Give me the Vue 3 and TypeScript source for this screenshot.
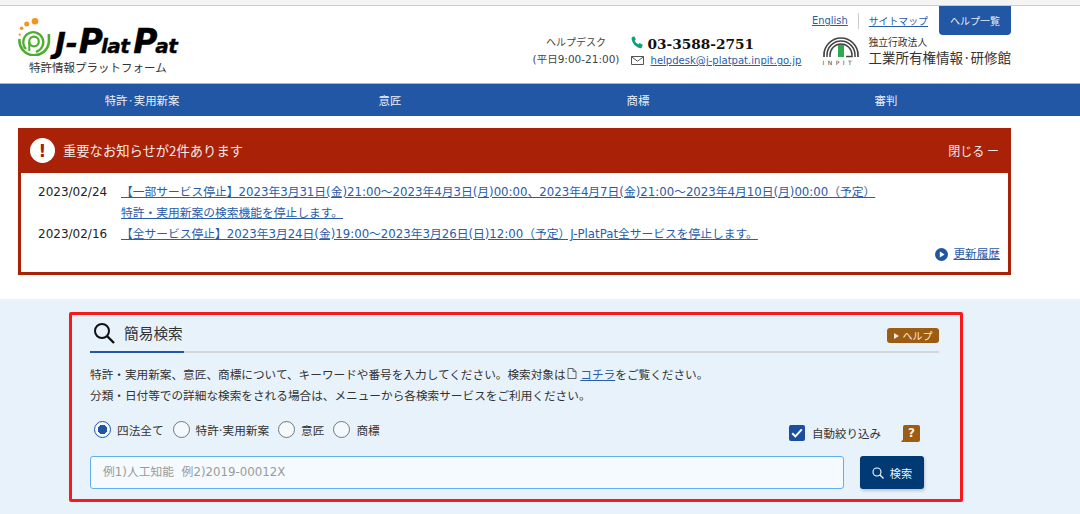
<script setup lang="ts">
const navItems: string[] = ['特許·実用新案', '意匠', '商標', '審判']
const notices = [
  { date: '2023/02/24', lines: ['【一部サービス停止】2023年3月31日(金)21:00～2023年4月3日(月)00:00、2023年4月7日(金)21:00～2023年4月10日(月)00:00（予定）', '特許・実用新案の検索機能を停止します。'] },
  { date: '2023/02/16', lines: ['【全サービス停止】2023年3月24日(金)19:00～2023年3月26日(日)12:00（予定）J-PlatPat全サービスを停止します。'] },
]
const radios = [
  { label: '四法全て', on: true },
  { label: '特許·実用新案', on: false },
  { label: '意匠', on: false },
  { label: '商標', on: false },
]
</script>

<template>
  <div class="page">
    <div class="topstrip"></div>
    <header class="header">
      <div class="logo">
        <div class="logo-row">
          <svg class="logo-mark" width="33" height="39" viewBox="0 0 33 39">
            <circle cx="17" cy="4.300" r="3.300" fill="#f7941d" />
            <circle cx="8.700" cy="7" r="2.500" fill="#f7941d" />
            <circle cx="3.700" cy="11.300" r="1.800" fill="#f7941d" />
            <circle cx="1.700" cy="17.700" r="1.100" fill="#f7941d" />
            <path d="M1.500 22a14.700 14.700 0 0 0 29.400 3V17" fill="none" stroke="#4cae2e" stroke-width="2.600" />
            <path d="M8 32a10 10 0 1 1 10 2.800" fill="none" stroke="#4cae2e" stroke-width="2.300" />
            <circle cx="16" cy="24.500" r="4.800" fill="none" stroke="#4cae2e" stroke-width="2.200" />
            <path d="M11.300 25V34" fill="none" stroke="#4cae2e" stroke-width="2" />
          </svg>
          <div class="logo-text">
            <span class="lt-j">J-</span><span class="lt-p">P</span><span class="lt-s">lat</span><span class="lt-p lt-p2">P</span><span class="lt-s">at</span>
          </div>
        </div>
        <div class="logo-sub">特許情報プラットフォーム</div>
      </div>
      <div class="head-right">
        <div class="toplinks">
          <a class="link">English</a>
          <span class="divider"></span>
          <a class="link">サイトマップ</a>
          <span class="help-list">ヘルプ一覧</span>
        </div>
        <div class="contact">
          <div class="desk">
            <div class="desk-name">ヘルプデスク</div>
            <div>(平日9:00-21:00)</div>
          </div>
          <div class="reach">
            <div class="tel">
              <svg width="13" height="13" viewBox="0 0 13 13">
                <path d="M1 1.200 3.200.3l1.700 3-1.200 1.200c.7 1.700 2 3 3.600 3.700L8.600 7l3.200 1.700L11 11.200c-.3.800-1 1.200-1.800 1C4.800 11.300 1.500 7.500.6 3c-.1-.8 0-1.400.4-1.800z" fill="#12a07c" />
              </svg>
              <span class="tel-num">03-3588-2751</span>
            </div>
            <div class="mail">
              <svg width="13" height="9" viewBox="0 0 13 9">
                <path d="M.5.5h12v8H.5zM.5.8 6.500 5.200 12.500.8" fill="none" stroke="#555" stroke-width="1" />
              </svg>
              <a class="link mail-link">helpdesk@j-platpat.inpit.go.jp</a>
            </div>
          </div>
          <div class="inpit">
            <div class="inpit-mark">
              <svg width="38" height="22" viewBox="0 0 38 22">
                <path d="M2 21V19A17 17 0 0 1 36 19V21" fill="none" stroke="#444" stroke-width="1.700" />
                <path d="M5 21V19A14 14 0 0 1 33 19V21" fill="none" stroke="#444" stroke-width="1.500" />
                <path d="M8 21V19A11 11 0 0 1 30 19V20.500H24" fill="none" stroke="#444" stroke-width="1.500" />
                <path d="M16 9h6v12h-6z" fill="#2fa84f" />
              </svg>
              <span class="inpit-word">INPIT</span>
            </div>
            <div class="inpit-text">
              <div class="inpit-small">独立行政法人</div>
              <div class="inpit-big">工業所有権情報·研修館</div>
            </div>
          </div>
        </div>
      </div>
    </header>

    <nav class="nav">
      <span v-for="n in navItems" :key="n" class="nav-item">{{ n }}</span>
    </nav>

    <section class="notice">
      <div class="notice-head">
        <div class="notice-title">
          <span class="bang">!</span>
          <span>重要なお知らせが2件あります</span>
        </div>
        <span class="close">閉じる ー</span>
      </div>
      <div class="notice-body">
        <div v-for="n in notices" :key="n.date" class="notice-row">
          <span class="notice-date">{{ n.date }}</span>
          <div class="notice-lines">
            <div v-for="l in n.lines" :key="l"><a class="link">{{ l }}</a></div>
          </div>
        </div>
        <div class="history">
          <svg width="13" height="13" viewBox="0 0 13 13">
            <circle cx="6.500" cy="6.500" r="6.500" fill="#1f56a4" />
            <path d="M4.800 3.600 9.600 6.500 4.800 9.400z" fill="#fff" />
          </svg>
          <a class="link">更新履歴</a>
        </div>
      </div>
    </section>

    <main class="band">
      <section class="search">
        <div class="search-head">
          <div class="search-title">
            <svg width="22" height="22" viewBox="0 0 22 22">
              <circle cx="9" cy="9" r="7" fill="none" stroke="#111" stroke-width="2" />
              <path d="M14 14l7 7" stroke="#111" stroke-width="2.400" />
            </svg>
            <span>簡易検索</span>
          </div>
          <span class="help-tag"><i class="tri"></i>ヘルプ</span>
        </div>
        <p class="desc">特許・実用新案、意匠、商標について、キーワードや番号を入力してください。検索対象は<svg class="doc" width="10" height="11" viewBox="0 0 10 11"><path d="M1 .5h5l3 3v7H1zM6 .5v3h3" fill="none" stroke="#555" stroke-width=".9" /></svg> <a class="link">コチラ</a>をご覧ください。</p>
        <p class="desc">分類・日付等での詳細な検索をされる場合は、メニューから各検索サービスをご利用ください。</p>
        <div class="options">
          <div class="radios">
            <label v-for="r in radios" :key="r.label" class="radio">
              <span class="dot" :class="{ on: r.on }"></span>{{ r.label }}
            </label>
          </div>
          <div class="auto">
            <span class="check">
              <svg width="12" height="10" viewBox="0 0 12 10"><path d="M1.200 5.200 4.400 8.400 10.800 1.400" fill="none" stroke="#fff" stroke-width="2" /></svg>
            </span>
            <span>自動絞り込み</span>
            <span class="q">?</span>
          </div>
        </div>
        <div class="query">
          <div class="input">例1)人工知能&nbsp;&nbsp;例2)2019-00012X</div>
          <button class="go" type="button">
            <svg width="12" height="12" viewBox="0 0 12 12">
              <circle cx="5" cy="5" r="4" fill="none" stroke="#fff" stroke-width="1.100" />
              <path d="M8 8l3.500 3.500" stroke="#fff" stroke-width="1.200" />
            </svg>
            <span>検索</span>
          </button>
        </div>
      </section>
    </main>
  </div>
</template>

<style>
html, body { margin: 0; background: #fff; }
</style>

<style scoped>
.page {
  width: 1080px;
  height: 514px;
  overflow: hidden;
  font-family: "DejaVu Sans", "Noto Sans CJK JP", sans-serif;
  font-size: 12px;
  color: #333;
  background: #fff;
}
.link { color: #2a5ca8; text-decoration: underline; }
.topstrip { height: 5px; background: #f4f4f4; border-bottom: 1px solid #ccc; }
.header {
  height: 77px;
  width: 993px;
  padding-left: 18px;
  display: flex;
  justify-content: space-between;
}
.logo { padding-top: 11px; }
.logo-row { display: flex; align-items: flex-end; height: 39px; }
.logo-mark { display: block; flex: none; }
.logo-text {
  display: flex;
  align-items: baseline;
  font-family: "DejaVu Sans", sans-serif;
  font-weight: 700;
  font-style: italic;
  color: #000;
  -webkit-text-stroke: .4px #000;
  line-height: 30px;
  margin-left: 4px;
  margin-bottom: -5px;
  white-space: nowrap;
}
.lt-j { font-size: 29px; letter-spacing: 0; margin-right: 1px; }
.lt-p { font-size: 33px; letter-spacing: -2px; }
.lt-p2 { margin-left: 4px; }
.lt-s { font-size: 20px; letter-spacing: -.6px; }
.logo-sub {
  font-family: "Noto Sans CJK JP", sans-serif;
  font-size: 11.500px;
  line-height: 14px;
  margin: 4px 0 0 11px;
  color: #333;
}
.head-right { display: flex; flex-direction: column; }
.toplinks { display: flex; justify-content: flex-end; align-items: center; height: 29px; font-size: 9.900px; }
.divider { width: 1px; height: 16px; background: #ccc; margin: 0 10px; }
.help-list {
  width: 72px;
  height: 29px;
  margin-left: 11px;
  background: #2257a5;
  color: #e6edf7;
  border-radius: 0 0 4px 4px;
  display: flex;
  align-items: center;
  justify-content: center;
  font-family: "Noto Sans CJK JP", sans-serif;
  font-size: 10px;
}
.contact { display: flex; }
.desk { width: 87px; text-align: center; font-size: 10.500px; line-height: 16px; color: #444; white-space: nowrap; }
.desk-name { font-size: 10px; }
.reach { margin-left: 11px; }
.tel { display: flex; align-items: center; height: 17px; margin-top: -1px; }
.tel-num { font-family: "DejaVu Serif", serif; font-weight: 700; font-size: 13.700px; color: #111; margin-left: 4px; line-height: 17px; position: relative; top: 2px; }
.mail { display: flex; align-items: center; margin-top: 3px; font-size: 10.050px; line-height: 13px; }
.mail-link { margin-left: 7px; }
.inpit { display: flex; margin-left: 21px; }
.inpit-mark { width: 38px; }
.inpit-mark svg { display: block; margin-top: 1px; }
.inpit-word { display: block; font-size: 6px; line-height: 8px; letter-spacing: 3.500px; color: #444; margin-top: 1px; white-space: nowrap; }
.inpit-text { margin-left: 8px; font-family: "Noto Sans CJK JP", sans-serif; color: #333; }
.inpit-small { font-size: 9.800px; line-height: 13px; margin-top: 1px; }
.inpit-big { font-size: 13.500px; line-height: 17px; white-space: nowrap; }
.nav {
  height: 32px;
  padding-left: 18px;
  background: #2257a5;
  border-top: 1px solid #9fb8d8;
  display: grid;
  grid-template-columns: repeat(4, 248px);
  align-items: center;
  font-family: "Noto Sans CJK JP", sans-serif;
  font-size: 11.400px;
  color: #e9eff8;
}
.nav-item { text-align: center; }
.notice {
  margin: 12px 0 0 18px;
  width: 987px;
  border: 3px solid #a92107;
  border-top-width: 0;
  height: 144px;
  background: #fff;
}
.notice-head {
  height: 45px;
  margin: 0 -3px;
  padding: 0 12px 0 12px;
  background: #a92107;
  color: #f6e9e5;
  display: flex;
  align-items: center;
  justify-content: space-between;
  font-family: "Noto Sans CJK JP", sans-serif;
}
.notice-title { display: flex; align-items: center; font-size: 13.300px; }
.bang {
  width: 25px;
  height: 25px;
  border-radius: 50%;
  background: #fff;
  color: #a92107;
  font-family: "DejaVu Sans", sans-serif;
  font-weight: 700;
  font-size: 17px;
  display: flex;
  align-items: center;
  justify-content: center;
  margin-right: 8px;
}
.close { font-size: 12px; }
.notice-body { box-sizing: border-box; padding: 9px 0 0 17px; position: relative; height: 99px; }
.notice-row { display: flex; line-height: 21px; }
.notice-date { width: 83px; flex: none; color: #222; }
.notice-lines { font-size: 11.750px; white-space: nowrap; }
.history {
  position: absolute;
  right: 8px;
  bottom: 11px;
  display: flex;
  align-items: center;
  gap: 5px;
  font-size: 11.650px;
  line-height: 14px;
}
.band { margin-top: 24px; height: 215px; background: #e8f2fb; padding: 13px 0 0 69px; box-sizing: border-box; }
.search {
  box-sizing: border-box;
  width: 894px;
  height: 190px;
  border: 3px solid #f81a1a;
  border-radius: 2px;
  padding: 6px 20px 0 18px;
}
.search-head {
  height: 32px;
  box-sizing: border-box;
  border-bottom: 2px solid #d4d6da;
  display: flex;
  justify-content: space-between;
  margin-right: 1px;
}
.search-title {
  width: 94px;
  box-sizing: border-box;
  display: flex;
  align-items: center;
  padding: 0 0 7px 3px;
  gap: 9px;
  border-bottom: 2px solid #2257a5;
  height: 32px;
  font-family: "Noto Sans CJK JP", sans-serif;
  font-size: 14.700px;
  white-space: nowrap;
}
.search-title svg { flex: none; }
.help-tag {
  margin-top: 7px;
  width: 52px;
  height: 15px;
  background: #9c5c14;
  color: #f5ecdf;
  border-radius: 3px;
  font-family: "Noto Sans CJK JP", sans-serif;
  font-size: 10px;
  line-height: 15px;
  display: flex;
  align-items: center;
  justify-content: center;
}
.tri {
  width: 0;
  height: 0;
  border-left: 5px solid #f5ecdf;
  border-top: 3px solid transparent;
  border-bottom: 3px solid transparent;
  margin-right: 4px;
}
.desc { margin: 0; font-size: 11.650px; line-height: 21px; color: #333; white-space: nowrap; }
.search-head + .desc { margin-top: 12px; }
.doc { margin-left: 1px; }
.options { display: flex; justify-content: space-between; margin-top: 12px; height: 26px; }
.radios { display: flex; align-items: center; padding-left: 4px; margin-top: -6px; }
.radio { display: flex; align-items: center; margin-right: 9px; font-size: 11.650px; }
.dot {
  box-sizing: border-box;
  width: 17px;
  height: 17px;
  border-radius: 50%;
  border: 1.500px solid #777;
  margin-right: 6px;
  background: #f4f9fe;
}
.dot.on { border-color: #1f56a4; background: radial-gradient(circle, #1f56a4 0 4.500px, #f4f9fe 5px); }
.auto { display: flex; align-items: center; font-size: 11.500px; margin-right: 20px; padding-top: 2px; }
.check {
  width: 16px;
  height: 16px;
  background: #1b4e9f;
  border-radius: 2px;
  margin-right: 7px;
  display: flex;
  align-items: center;
  justify-content: center;
}
.q {
  position: relative;
  width: 17px;
  height: 17px;
  margin-left: 22px;
  background: #9c5c14;
  color: #f7efe2;
  border-radius: 2px;
  font-weight: 700;
  font-size: 12px;
  line-height: 17px;
  text-align: center;
}
.q::after {
  content: "";
  position: absolute;
  left: -2px;
  bottom: 0;
  border-right: 3px solid #9c5c14;
  border-top: 4px solid transparent;
}
.query { display: flex; margin-top: 11px; gap: 16px; }
.input {
  box-sizing: border-box;
  width: 754px;
  height: 33px;
  border: 1px solid #62aef2;
  border-radius: 3px;
  background: #f5faff;
  color: #999;
  padding-left: 12px;
  font-size: 11.800px;
  line-height: 31px;
}
.go {
  width: 64px;
  height: 33px;
  border: 0;
  padding: 0;
  border-radius: 3px;
  background: #003a75;
  color: #eef3f9;
  box-shadow: 1px 2px 3px rgba(0, 0, 0, .18);
  display: flex;
  align-items: center;
  justify-content: center;
  gap: 6px;
  font-family: "Noto Sans CJK JP", sans-serif;
  font-size: 11.200px;
}
</style>
